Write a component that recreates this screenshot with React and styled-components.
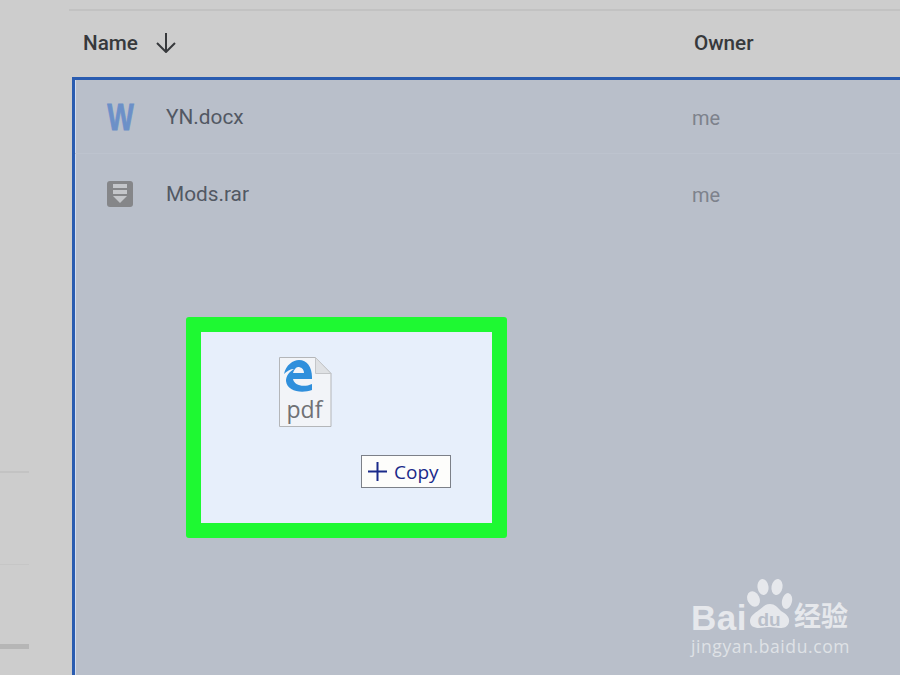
import React from "react";
import styled, { createGlobalStyle } from "styled-components";

const GlobalStyle = createGlobalStyle`
  html, body {
    margin: 0;
    padding: 0;
    background: #cdcdcd;
    font-family: Roboto, "Liberation Sans", sans-serif;
  }
`;

const Page = styled.div`
  position: relative;
  display: flex;
  width: 900px;
  height: 675px;
  overflow: hidden;
  background: #cdcdcd;
`;

const Sidebar = styled.aside`
  display: flex;
  flex-direction: column;
  flex: 0 0 69px;
  padding-top: 471px;
`;

const SideRule = styled.div`
  width: 29px;
  height: ${(p) => p.$height}px;
  margin-bottom: ${(p) => p.$gap}px;
  background: ${(p) => p.$color};
`;

const Main = styled.main`
  flex: 1;
  display: flex;
  flex-direction: column;
  padding-top: 9px;
`;

const TopLine = styled.div`
  height: 2px;
  background: #c2c2c2;
`;

const Header = styled.div`
  display: grid;
  grid-template-columns: 611px 1fr;
  align-items: center;
  box-sizing: border-box;
  height: 66px;
  padding: 0 0 3px 14px;
  color: #37393c;
  font-size: 20.7px;
  font-weight: 500;
`;

const NameHead = styled.div`
  display: flex;
  align-items: center;
  gap: 18px;
`;

const DropZone = styled.section`
  flex: 1;
  margin-left: 3px;
  background: #b9bfca;
  border-top: 3px solid #2a5cb0;
  border-left: 3px solid #2a5cb0;
  box-shadow: inset 1px 0 0 #d2dcee;
`;

const Row = styled.div`
  display: grid;
  grid-template-columns: 91px 526px 1fr;
  align-items: center;
  height: ${(p) => p.$height}px;
  box-sizing: border-box;
  border-bottom: 1px solid ${(p) => p.$line};
`;

const IconCell = styled.div`
  display: flex;
  justify-content: center;
  width: 90px;
`;

const WordGlyph = styled.span`
  display: block;
  padding-top: 2px;
  color: #6c90c8;
  font-family: "Liberation Sans", sans-serif;
  font-weight: 700;
  font-size: 37px;
  line-height: 36px;
  -webkit-text-stroke: 0.8px #6c90c8;
  transform: scaleX(0.76);
`;

const FileName = styled.div`
  color: #525863;
  font-size: 20.8px;
`;

const Owner = styled.div`
  color: #7d828c;
  font-size: 20px;
  padding-top: 3px;
`;

const Highlight = styled.div`
  width: 291px;
  height: 191px;
  margin: 83px 0 0 111px;
  background: #e7effb;
  border: 15px solid #1ef932;
  border-radius: 3px;
  display: flex;
  flex-direction: column;
  align-items: flex-start;
`;

const Ghost = styled.div`
  position: relative;
  width: 53px;
  height: 70px;
  margin: 25px 0 0 78px;
`;

const GhostLabel = styled.span`
  position: absolute;
  left: 0;
  right: 2px;
  bottom: 2px;
  text-align: center;
  color: #6f7175;
  font-family: "Open Sans", sans-serif;
  font-size: 23px;
  line-height: 32px;
`;

const CopyTag = styled.div`
  display: flex;
  align-items: center;
  gap: 7px;
  box-sizing: border-box;
  width: 90px;
  height: 33px;
  margin: 28px 0 0 160px;
  padding-left: 6px;
  background: #fdfdfb;
  border: 1px solid #7c8088;
  color: #1a2a8a;
  font-family: "Open Sans", sans-serif;
  font-size: 19px;
`;

const Watermark = styled.div`
  position: absolute;
  left: 691px;
  top: 578px;
  width: 162px;
  color: #e6e8ec;
`;

const BrandLine = styled.div`
  display: flex;
  align-items: flex-start;
  height: 54px;
`;

const BrandBai = styled.span`
  width: 54px;
  margin-top: 22px;
  font-family: "Liberation Sans", sans-serif;
  font-weight: 700;
  font-size: 35px;
  line-height: 35px;
  letter-spacing: 0.5px;
`;

const Paw = styled.div`
  position: relative;
  width: 48px;
  height: 52px;
`;

const PawText = styled.span`
  position: absolute;
  left: 9px;
  top: 33px;
  width: 30px;
  text-align: center;
  color: #b9bfca;
  font-family: "Liberation Sans", sans-serif;
  font-weight: 700;
  font-size: 19px;
  line-height: 18px;
`;

const BrandCn = styled.span`
  margin: 23px 0 0 1px;
  font-family: "Noto Sans CJK SC", sans-serif;
  font-weight: 700;
  font-size: 27px;
  line-height: 28px;
`;

const BrandUrl = styled.div`
  margin-top: 4px;
  color: #dfe2e6;
  font-family: "Open Sans", sans-serif;
  font-size: 17.5px;
  line-height: 20px;
  letter-spacing: 0.6px;
  white-space: nowrap;
`;

const ArrowDown = () => (
  <svg width="20" height="20" viewBox="0 0 20 20" fill="none" stroke="#37393c" strokeWidth="2">
    <path d="M10 0v19M1 10l9 9 9-9" />
  </svg>
);

const RarIcon = () => (
  <svg width="26" height="26" viewBox="0 0 26 26">
    <rect width="26" height="26" rx="3" fill="#858689" />
    <rect x="6" y="3" width="14" height="4" fill="#c4c6ca" />
    <rect x="6" y="9" width="14" height="4" fill="#c4c6ca" />
    <path d="M6 15h14l-7 7z" fill="#c4c6ca" />
  </svg>
);

const PageShape = () => (
  <svg width="53" height="70" viewBox="0 0 53 70" style={{ display: "block" }}>
    <path d="M.5.5h36l15.500 16v53H.5z" fill="#f2f4f8" stroke="#b4b6b9" />
    <path d="M36.500.5v16H52z" fill="#dfe1e4" stroke="#c4c6c9" />
    <path
      d="M5 17C7 8 14 3 20 3c8 0 13 7 13 17v2H14c1 6 10 9 19 5v6c-11 4-25 1-26-9 0-5 3-9 8-12-4 0-7 2-10 5zM14 16h11c0-4-3-6-6-6-2 0-4 3-5 6z"
      fill="#2f8fdc"
      fillRule="evenodd"
    />
  </svg>
);

const PlusIcon = () => (
  <svg width="19" height="19" viewBox="0 0 19 19" stroke="#1a2a8a" strokeWidth="2">
    <path d="M9.500 0v19M0 9.500h19" />
  </svg>
);

const PawShape = () => (
  <svg width="48" height="52" viewBox="0 0 48 52" fill="#e6e8ec">
    <ellipse cx="8.500" cy="21" rx="6" ry="8" transform="rotate(-25 8.500 21)" />
    <ellipse cx="18" cy="9" rx="5.500" ry="8" transform="rotate(-8 18 9)" />
    <ellipse cx="32" cy="9" rx="5.500" ry="8" transform="rotate(10 32 9)" />
    <ellipse cx="42" cy="23" rx="5" ry="8" transform="rotate(12 42 23)" />
    <path d="M25 26c5 0 7 3 11 7 5 3 9 6 8 11-1 5-5 6-9 6-4 0-7-1-10-1-4 0-7 1-11 1-5 0-9-2-9-7 0-5 5-8 9-11 4-3 6-6 11-6z" />
  </svg>
);

const App = () => (
  <>
    <GlobalStyle />
    <Page>
      <Sidebar>
        <SideRule $height={2} $gap={91} $color="#c3c3c3" />
        <SideRule $height={1} $gap={79} $color="#c6c6c6" />
        <SideRule $height={5} $gap={0} $color="#b6b6b6" />
      </Sidebar>
      <Main>
        <TopLine />
        <Header>
          <NameHead>
            Name
            <ArrowDown />
          </NameHead>
          <div>Owner</div>
        </Header>
        <DropZone>
          <Row $height={74} $line="#bdc3ce">
            <IconCell>
              <WordGlyph>W</WordGlyph>
            </IconCell>
            <FileName>YN.docx</FileName>
            <Owner>me</Owner>
          </Row>
          <Row $height={80} $line="transparent">
            <IconCell>
              <RarIcon />
            </IconCell>
            <FileName>Mods.rar</FileName>
            <Owner>me</Owner>
          </Row>
          <Highlight>
            <Ghost>
              <PageShape />
              <GhostLabel>pdf</GhostLabel>
            </Ghost>
            <CopyTag>
              <PlusIcon />
              Copy
            </CopyTag>
          </Highlight>
        </DropZone>
      </Main>
      <Watermark>
        <BrandLine>
          <BrandBai>Bai</BrandBai>
          <Paw>
            <PawShape />
            <PawText>du</PawText>
          </Paw>
          <BrandCn>经验</BrandCn>
        </BrandLine>
        <BrandUrl>jingyan.baidu.com</BrandUrl>
      </Watermark>
    </Page>
  </>
);

export default App;
